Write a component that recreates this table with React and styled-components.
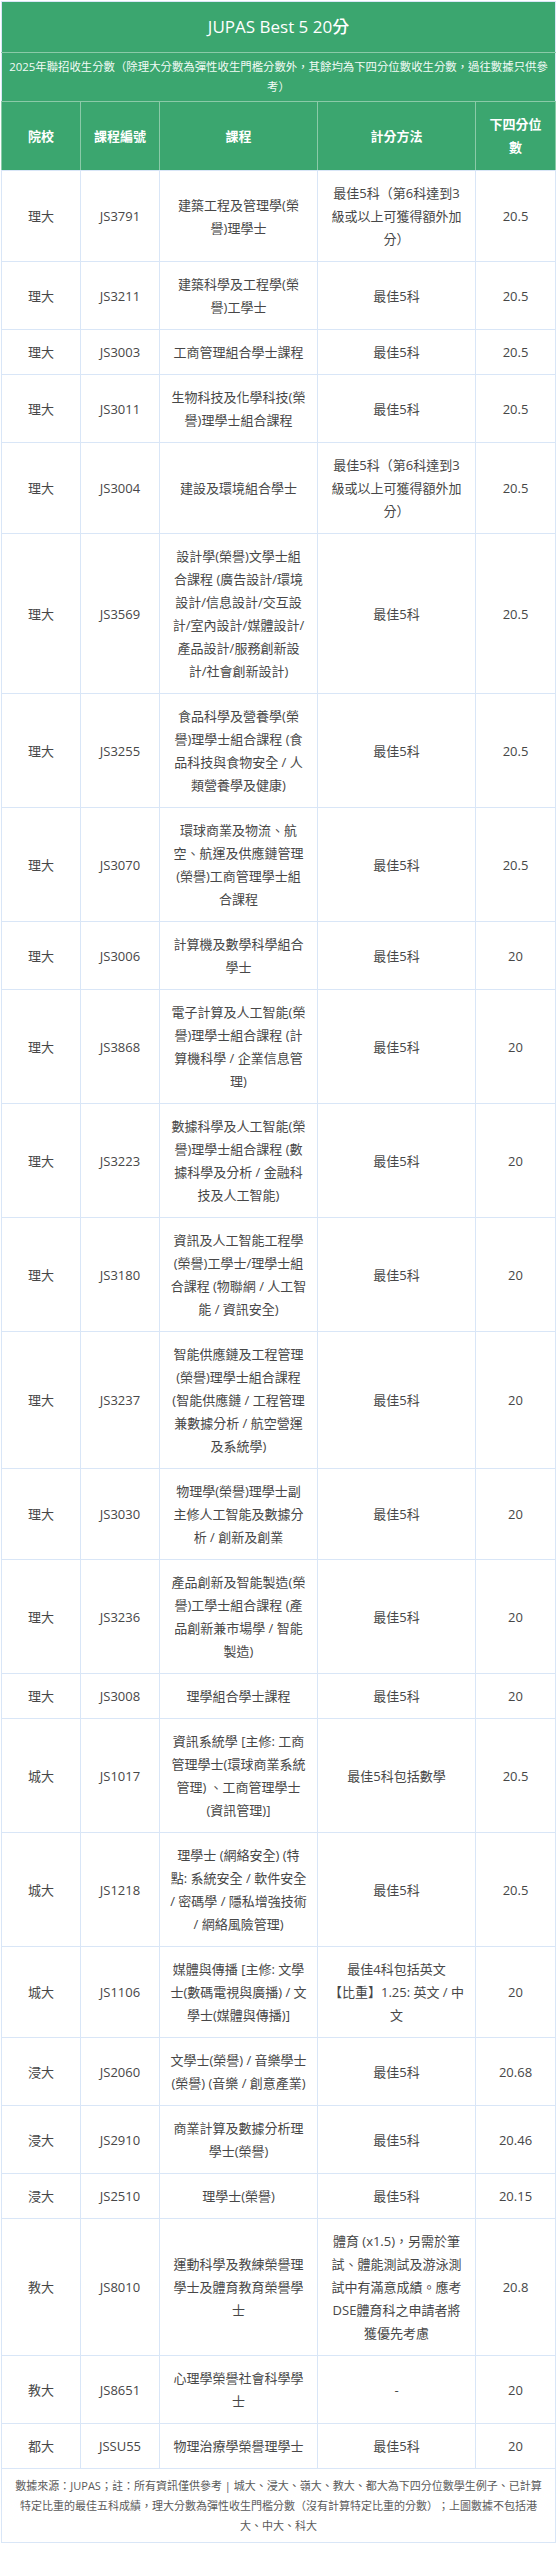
import React from "react";
import styled, { createGlobalStyle } from "styled-components";

const GlobalStyle = createGlobalStyle`
  html, body {
    margin: 0;
    padding: 0;
    background: #ffffff;
  }
  body {
    font-family: "Open Sans", "Noto Sans CJK TC", sans-serif;
    text-spacing-trim: space-all;
  }
`;

const GREEN = "#3ba66f";
const HEAD_LINE = "#8acaa8";
const BODY_LINE = "#d9e6f7";

const Frame = styled.div`
  padding: 1px;
`;

const Table = styled.table`
  width: 554px;
  border-collapse: collapse;
  table-layout: fixed;
  border: 1px solid ${BODY_LINE};
  font-family: "Open Sans", "Noto Sans CJK TC", sans-serif;
`;

const Col = styled.col`
  width: ${(p) => p.$w}px;
`;

const TitleCell = styled.th`
  background: ${GREEN};
  color: #ffffff;
  font-size: 17px;
  font-weight: 500;
  line-height: 26px;
  padding: 12px 10px;
  text-align: center;
  border-bottom: 1px solid ${HEAD_LINE};
`;

const NoteCell = styled.th`
  background: ${GREEN};
  color: #f2fbf6;
  font-size: 11.4px;
  font-weight: 400;
  line-height: 20px;
  padding: 4px 4px;
  text-align: center;
  border-bottom: 1px solid ${HEAD_LINE};
`;

const HeadCell = styled.th`
  background: ${GREEN};
  color: #ffffff;
  font-size: 13px;
  font-weight: 700;
  line-height: 23px;
  padding: 11px 9px;
  text-align: center;
  vertical-align: middle;
  border-left: 1px solid ${HEAD_LINE};
  border-right: 1px solid ${HEAD_LINE};
  border-bottom: 1px solid ${BODY_LINE};
`;

const Cell = styled.td`
  color: #474747;
  font-size: 13px;
  line-height: 23px;
  padding: 11px 9.9px 10px;
  text-align: center;
  vertical-align: middle;
  border: 1px solid ${BODY_LINE};
  background: #ffffff;
`;

const FootCell = styled.td`
  color: #5a5a5a;
  font-size: 11px;
  line-height: 20px;
  padding: 7px 12.5px 6px;
  text-align: center;
  border: 1px solid ${BODY_LINE};
`;

const rows = [
  ["理大", "JS3791", "建築工程及管理學(榮譽)理學士", "最佳5科（第6科達到3級或以上可獲得額外加分）", "20.5"],
  ["理大", "JS3211", "建築科學及工程學(榮譽)工學士", "最佳5科", "20.5"],
  ["理大", "JS3003", "工商管理組合學士課程", "最佳5科", "20.5"],
  ["理大", "JS3011", "生物科技及化學科技(榮譽)理學士組合課程", "最佳5科", "20.5"],
  ["理大", "JS3004", "建設及環境組合學士", "最佳5科（第6科達到3級或以上可獲得額外加分）", "20.5"],
  ["理大", "JS3569", "設計學(榮譽)文學士組合課程 (廣告設計/環境設計/信息設計/交互設計/室內設計/媒體設計/產品設計/服務創新設計/社會創新設計)", "最佳5科", "20.5"],
  ["理大", "JS3255", "食品科學及營養學(榮譽)理學士組合課程 (食品科技與食物安全 / 人類營養學及健康)", "最佳5科", "20.5"],
  ["理大", "JS3070", "環球商業及物流、航空、航運及供應鏈管理(榮譽)工商管理學士組合課程", "最佳5科", "20.5"],
  ["理大", "JS3006", "計算機及數學科學組合學士", "最佳5科", "20"],
  ["理大", "JS3868", "電子計算及人工智能(榮譽)理學士組合課程 (計算機科學 / 企業信息管理)", "最佳5科", "20"],
  ["理大", "JS3223", "數據科學及人工智能(榮譽)理學士組合課程 (數據科學及分析 / 金融科技及人工智能)", "最佳5科", "20"],
  ["理大", "JS3180", "資訊及人工智能工程學(榮譽)工學士/理學士組合課程 (物聯網 / 人工智能 / 資訊安全)", "最佳5科", "20"],
  ["理大", "JS3237", "智能供應鏈及工程管理(榮譽)理學士組合課程 (智能供應鏈 / 工程管理兼數據分析 / 航空營運及系統學)", "最佳5科", "20"],
  ["理大", "JS3030", "物理學(榮譽)理學士副主修人工智能及數據分析 / 創新及創業", "最佳5科", "20"],
  ["理大", "JS3236", "產品創新及智能製造(榮譽)工學士組合課程 (產品創新兼市場學 / 智能製造)", "最佳5科", "20"],
  ["理大", "JS3008", "理學組合學士課程", "最佳5科", "20"],
  ["城大", "JS1017", "資訊系統學 [主修: 工商管理學士(環球商業系統管理) 、工商管理學士(資訊管理)]", "最佳5科包括數學", "20.5"],
  ["城大", "JS1218", "理學士 (網絡安全) (特點: 系統安全 / 軟件安全 / 密碼學 / 隱私增強技術 / 網絡風險管理)", "最佳5科", "20.5"],
  ["城大", "JS1106", "媒體與傳播 [主修: 文學士(數碼電視與廣播) / 文學士(媒體與傳播)]", ["最佳4科包括英文", "【比重】1.25: 英文 / 中文"], "20"],
  ["浸大", "JS2060", "文學士(榮譽) / 音樂學士(榮譽) (音樂 / 創意產業)", "最佳5科", "20.68"],
  ["浸大", "JS2910", "商業計算及數據分析理學士(榮譽)", "最佳5科", "20.46"],
  ["浸大", "JS2510", "理學士(榮譽)", "最佳5科", "20.15"],
  ["教大", "JS8010", "運動科學及教練榮譽理學士及體育教育榮譽學士", "體育 (x1.5)，另需於筆試、體能測試及游泳測試中有滿意成績。應考DSE體育科之申請者將獲優先考慮", "20.8"],
  ["教大", "JS8651", "心理學榮譽社會科學學士", "-", "20"],
  ["都大", "JSSU55", "物理治療學榮譽理學士", "最佳5科", "20"],
];

const renderScore = (s) =>
  Array.isArray(s)
    ? s.map((line, i) => (
        <React.Fragment key={i}>
          {i > 0 && <br />}
          {line}
        </React.Fragment>
      ))
    : s;

export default function App() {
  return (
    <>
      <GlobalStyle />
      <Frame>
        <Table>
          <colgroup>
            <Col $w={79} />
            <Col $w={79} />
            <Col $w={158} />
            <Col $w={158} />
            <Col $w={80} />
          </colgroup>
          <thead>
            <tr>
              <TitleCell colSpan={5}>JUPAS Best 5 20分</TitleCell>
            </tr>
            <tr>
              <NoteCell colSpan={5}>
                2025年聯招收生分數（除理大分數為彈性收生門檻分數外，其餘均為下四分位數收生分數，過往數據只供參考）
              </NoteCell>
            </tr>
            <tr>
              <HeadCell>院校</HeadCell>
              <HeadCell>課程編號</HeadCell>
              <HeadCell>課程</HeadCell>
              <HeadCell>計分方法</HeadCell>
              <HeadCell>下四分位數</HeadCell>
            </tr>
          </thead>
          <tbody>
            {rows.map(([school, code, course, score, q]) => (
              <tr key={code}>
                <Cell>{school}</Cell>
                <Cell>{code}</Cell>
                <Cell>{course}</Cell>
                <Cell>{renderScore(score)}</Cell>
                <Cell>{q}</Cell>
              </tr>
            ))}
          </tbody>
          <tfoot>
            <tr>
              <FootCell colSpan={5}>
                數據來源：JUPAS；註：所有資訊僅供參考 | 城大、浸大、嶺大、教大、都大為下四分位數學生例子、已計算特定比重的最佳五科成績，理大分數為彈性收生門檻分數（沒有計算特定比重的分數）；上圖數據不包括港大、中大、科大
              </FootCell>
            </tr>
          </tfoot>
        </Table>
      </Frame>
    </>
  );
}
